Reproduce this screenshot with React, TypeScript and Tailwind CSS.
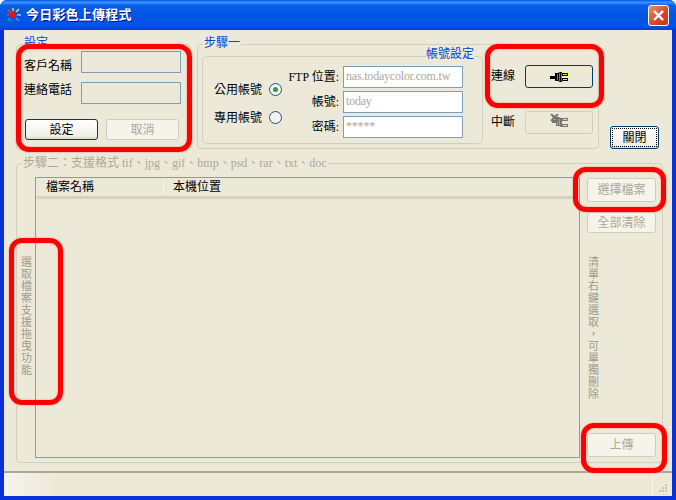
const FONT = "font-['Liberation_Serif','Noto_Sans_CJK_TC',serif]";

function PlugIcon({ off = false }: { off?: boolean }) {
  if (off) {
    return (
      <svg className="mb-[4px]" width="18" height="13" viewBox="0 0 18 13">
        <rect x="2" y="6" width="6" height="3" fill="#777770" />
        <path d="M6 3h3l2 1h1v9h-1l-2-1H6z" fill="#777770" />
        <rect x="7" y="5" width="1" height="6" fill="#a8a79d" />
        <rect x="9" y="5" width="1" height="6" fill="#a8a79d" />
        <rect x="12" y="4" width="6" height="3" fill="#777770" />
        <rect x="13" y="5" width="4" height="1" fill="#d8d6c8" />
        <rect x="12" y="10" width="6" height="3" fill="#777770" />
        <rect x="13" y="11" width="4" height="1" fill="#d8d6c8" />
        <path d="M1 0l7 7M8 0L1 7" stroke="#777770" strokeWidth="2.2" />
      </svg>
    );
  }
  return (
    <svg width="18" height="10" viewBox="0 0 18 10">
      <rect x="0" y="4" width="6" height="3" fill="#000000" />
      <path d="M5 1h3l2-1h2v10h-2l-2-1H5z" fill="#000000" />
      <rect x="7" y="2" width="1" height="6" fill="#777777" />
      <rect x="9" y="1" width="1" height="8" fill="#777777" />
      <rect x="11" y="1" width="1" height="8" fill="#777777" />
      <rect x="12" y="1" width="6" height="3" fill="#000000" />
      <rect x="13" y="2" width="4" height="1" fill="#f4e800" />
      <rect x="12" y="6" width="6" height="3" fill="#000000" />
      <rect x="13" y="7" width="4" height="1" fill="#f4e800" />
    </svg>
  );
}

function AppIcon() {
  return (
    <svg width="16" height="16" viewBox="0 0 16 16">
      <circle cx="7" cy="8" r="3" fill="#e0141c" />
      <path d="M2 3l3 3M1 8h2" stroke="#ff3a30" strokeWidth="1.4" />
      <path d="M7 1v3" stroke="#ffd84a" strokeWidth="1.4" />
      <path d="M13 2l-3 3" stroke="#f4e23c" strokeWidth="1.4" />
      <path d="M11 8h4" stroke="#8fd0ff" strokeWidth="1.4" />
      <path d="M10 11l3 3" stroke="#3aa0e8" strokeWidth="1.4" />
      <path d="M6 12v3" stroke="#2a6fe0" strokeWidth="1.4" />
      <path d="M4 11l-2 3" stroke="#28b050" strokeWidth="1.4" />
    </svg>
  );
}

function Radio({ checked = false }: { checked?: boolean }) {
  return (
    <span className="flex h-[13px] w-[13px] items-center justify-center rounded-full border border-[#1c5180] bg-[#f4f3ee]">
      {checked && <span className="h-[5px] w-[5px] rounded-full bg-[#2aa13a]" />}
    </span>
  );
}

function TextBox({ value, className = "" }: { value?: string; className?: string }) {
  return (
    <div className={`border border-[#7f9db9] pl-[2px] pt-[3px] tracking-[-0.2px] text-[#aca899] ${className}`}>
      {value}
    </div>
  );
}

function Btn({ label, className = "" }: { label: string; className?: string }) {
  return (
    <div className={`flex items-center justify-center rounded-[3px] border border-[#cfcdc0] bg-[#f5f4ea] text-[#aca899] ${className}`}>
      {label}
    </div>
  );
}

function Vertical({ text, className = "" }: { text: string; className?: string }) {
  return (
    <div className={`flex w-[13px] flex-col items-center text-[11px] text-[#a09c8c] ${className}`}>
      {Array.from(text).map((ch, i) => (
        <span key={i} className="h-[12px] leading-[12px]">{ch}</span>
      ))}
    </div>
  );
}

function Highlight({ className }: { className: string }) {
  return (
    <div className={`pointer-events-none absolute rounded-[13px] border-[5px] border-[#ff0000] shadow-[0_0_1.5px_#ff5050,inset_0_0_1.5px_#ff5050] ${className}`} />
  );
}

export default function App() {
  return (
    <div className={`relative flex h-[500px] w-[676px] flex-col overflow-hidden rounded-t-[7px] bg-[#0831d9] text-[12px] leading-[12px] text-black ${FONT}`}>
      {/* title bar */}
      <div className="flex h-[30px] shrink-0 items-center bg-[linear-gradient(180deg,#0058e6_0%,#3a93ff_8%,#0a5fe8_18%,#0054e3_55%,#0055eb_85%,#0043cf_100%)] pl-[6px] pr-[7px]">
        <AppIcon />
        <span className="ml-[4px] text-[13px] font-bold tracking-[0.2px] text-white [text-shadow:1px_1px_0_#0f1089]">今日彩色上傳程式</span>
        <div className="ml-auto flex h-[21px] w-[21px] items-center justify-center rounded-[3px] border border-white bg-[linear-gradient(135deg,#e8906c,#d6452a_60%,#c03a18)]">
          <svg width="13" height="13" viewBox="0 0 13 13">
            <path d="M2 2l9 9M11 2l-9 9" stroke="#ffffff" strokeWidth="2.4" />
          </svg>
        </div>
      </div>

      {/* client area */}
      <div className="mx-[4px] flex min-h-0 flex-1 flex-col bg-[#ece9d8]">
        <div className="ml-[12px] mt-[14px] flex h-[106px] shrink-0">
          {/* 設定 */}
          <div className="relative h-full w-[175px] rounded-[4px] border border-[#d0d0bf] pl-[6px] pt-[6px]">
            <span className="absolute left-[6px] top-[-8px] bg-[#ece9d8] px-[1px] text-[#0046d5]">設定</span>
            <div className="flex h-[22px]">
              <span className="ml-[1px] mt-[9px] w-[57px]">客戶名稱</span>
              <TextBox className="h-[22px] w-[100px]" />
            </div>
            <div className="mt-[9px] flex h-[22px]">
              <span className="ml-[1px] mt-[2px] w-[57px]">連絡電話</span>
              <TextBox className="h-[22px] w-[100px]" />
            </div>
            <div className="ml-[2px] mt-[15px] flex gap-[8px]">
              <div className="flex h-[21px] w-[73px] items-center justify-center rounded-[3px] border border-[#003c74] bg-[linear-gradient(180deg,#ffffff,#f0f0e8_85%,#d8d5c8)]">設定</div>
              <Btn label="取消" className="h-[21px] w-[73px]" />
            </div>
          </div>

          {/* 步驟一 */}
          <div className="relative ml-[6px] flex h-[105px] w-[402px] items-start rounded-[4px] border border-[#d0d0bf]">
            <span className="absolute left-[5px] top-[-8px] bg-[#ece9d8] px-[1px] text-[#0046d5]">步驟一</span>
            <div className="relative ml-[4px] mt-[11px] flex h-[88px] w-[281px] rounded-[5px] border border-[#d0d0bf]">
              <span className="absolute right-[8px] top-[-9px] bg-[#ece9d8] text-[#0046d5]">帳號設定</span>
              <div className="ml-[11px] mt-[26px] flex flex-col gap-[15px]">
                <div className="flex items-center gap-[7px]"><span>公用帳號</span><Radio checked /></div>
                <div className="flex items-center gap-[7px]"><span>專用帳號</span><Radio /></div>
              </div>
              <div className="ml-auto mr-[19px] mt-[9px] flex flex-col gap-[3px]">
                {[
                  ["FTP 位置:", "nas.todaycolor.com.tw"],
                  ["帳號:", "today"],
                  ["密碼:", "*****"],
                ].map(([label, value]) => (
                  <div key={label} className="flex h-[22px] items-center justify-end gap-[4px]">
                    <span>{label}</span>
                    <TextBox value={value} className="h-[22px] w-[120px] bg-white" />
                  </div>
                ))}
              </div>
            </div>
            <div className="ml-[8px] mt-[20px] flex flex-col gap-[23px]">
              <div className="flex items-center">
                <span className="mb-[2px] w-[34px]">連線</span>
                <div className="flex h-[23px] w-[68px] items-center justify-center rounded-[3px] border border-[#003c74] bg-[#ece9d8]">
                  <PlugIcon />
                </div>
              </div>
              <div className="flex items-center">
                <span className="mb-[2px] w-[34px]">中斷</span>
                <div className="flex h-[23px] w-[68px] items-center justify-center rounded-[3px] border border-[#cfcdc0] bg-[#ece9d8]">
                  <PlugIcon off />
                </div>
              </div>
            </div>
          </div>

          <div className="ml-[11px] mt-auto mb-[1px] flex h-[23px] w-[49px] items-center justify-center rounded-[3px] border border-[#003c74] bg-[linear-gradient(180deg,#ffffff,#f0f0e8_85%,#d8d5c8)] outline-1 -outline-offset-3 outline-dotted outline-black">關閉</div>
        </div>

        {/* 步驟二 */}
        <div className="relative ml-[12px] mt-[13px] flex h-[300px] w-[647px] shrink-0 rounded-[4px] border border-[#d0d0bf]">
          <span className="absolute left-[5px] top-[-7px] bg-[#ece9d8] px-[1px] text-[#aca899]">步驟二：支援格式 tif、jpg、gif、bmp、psd、rar、txt、doc</span>
          <div className="w-[18px] shrink-0 pl-[3px] pt-[92px]">
            <Vertical text="選取檔案支援拖曳功能" />
          </div>
          <div className="mt-[13px] h-[281px] w-[545px] shrink-0 border border-[#7f9db9] px-[1px]">
            <div className="flex h-[21px] items-center border-b-[3px] border-[#d6d2c2]">
              <div className="w-[126px] pl-[9px]">檔案名稱</div>
              <div className="h-[13px] w-[1px] bg-[#f8f7f0]" />
              <div className="pl-[9px]">本機位置</div>
            </div>
          </div>
          <div className="ml-[7px] flex w-[69px] flex-col pb-[5px] pt-[14px]">
            <Btn label="選擇檔案" className="h-[24px]" />
            <Btn label="全部清除" className="mt-[10px] h-[21px]" />
            <Vertical text="清單右鍵選取，可單獨刪除" className="mt-[23px]" />
            <Btn label="上傳" className="mt-auto h-[24px]" />
          </div>
        </div>

        {/* status bar */}
        <div className="mt-auto flex h-[25px] shrink-0 items-stretch justify-end border-t-2 border-[#aca899] bg-[linear-gradient(90deg,#f4f3ee,#ece9d8_55px)]">
          <div className="w-[1px] bg-[#f8f7f0]" />
          <svg className="mx-[3px] self-end" width="13" height="13" viewBox="0 0 13 13">
            <g fill="#c5c2b2">
              <rect x="9" y="1" width="2" height="2" />
              <rect x="6" y="4" width="2" height="2" />
              <rect x="9" y="4" width="2" height="2" />
              <rect x="3" y="7" width="2" height="2" />
              <rect x="6" y="7" width="2" height="2" />
              <rect x="9" y="7" width="2" height="2" />
            </g>
          </svg>
        </div>
      </div>
      <div className="h-[4px] shrink-0" />

      {/* red annotation marks drawn over the window */}
      <Highlight className="left-[16px] top-[44px] h-[108px] w-[176px]" />
      <Highlight className="left-[485px] top-[44px] h-[64px] w-[119px]" />
      <Highlight className="left-[573px] top-[167px] h-[45px] w-[93px]" />
      <Highlight className="left-[9px] top-[238px] h-[167px] w-[54px]" />
      <Highlight className="left-[581px] top-[423px] h-[50px] w-[86px]" />
    </div>
  );
}
